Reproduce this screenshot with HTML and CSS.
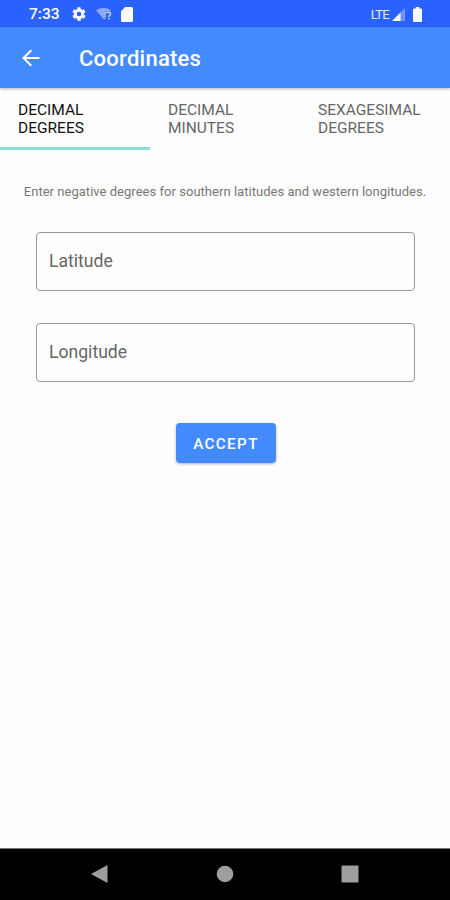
FILE: index.html
```
<!DOCTYPE html>
<html lang="en">
<head>
  <meta charset="UTF-8">
  <title>Coordinates</title>
  <link rel="stylesheet" href="styles.css">
</head>
<body>
  <div class="status-bar">
    <span class="clock">7:33</span>
    <svg class="icon-settings" width="16" height="16" viewBox="0 0 24 24"><path fill="#fff" fill-rule="evenodd" d="M19.4 13a7.500 7.500 0 0 0 0-2l2.100-1.650a.5.5 0 0 0 .12-.64l-2-3.460a.5.5 0 0 0-.6-.22l-2.500 1a7.300 7.300 0 0 0-1.700-.98l-.38-2.650A.5.5 0 0 0 14 2h-4a.5.5 0 0 0-.5.42l-.37 2.650c-.6.25-1.170.59-1.690.98l-2.500-1a.5.5 0 0 0-.6.22l-2 3.460a.5.5 0 0 0 .12.64L4.600 11a7.900 7.900 0 0 0 0 2l-2.100 1.650a.5.5 0 0 0-.12.64l2 3.460c.12.220.390.300.600.220l2.500-1c.52.400 1.080.730 1.700.980l.37 2.650c.04.240.250.400.500.400h4c.25 0 .46-.16.500-.4l.37-2.650a7.700 7.700 0 0 0 1.700-.98l2.500 1c.22.080.480 0 .600-.22l2-3.460a.5.5 0 0 0-.12-.64zM12 15.500a3.500 3.500 0 1 1 0-7 3.500 3.500 0 0 1 0 7z"/></svg>
    <svg class="icon-wifi" width="17" height="14" viewBox="0 0 17 14"><path fill="#8aa8ff" d="M0 3.200Q7.500-1.800 15 3.200L13.400 4.500H10v5.700L8.300 13z"/><path fill="none" stroke="#d5e0ff" stroke-width="1.400" d="M10.700 6.400c.2-1.800 3.900-1.800 3.900.3 0 1.500-1.700 1.700-1.700 3.400M12.900 11v1.500"/></svg>
    <svg class="icon-card" width="12" height="15" viewBox="0 0 12 15"><path fill="#fff" d="M4.200 0H10.500Q12 0 12 1.500V13.500Q12 15 10.500 15H1.500Q0 15 0 13.500V4.200z"/><path stroke="#dce5ff" d="M5 2v2M7.300 2v2M9.600 2v2"/></svg>
    <span class="network">LTE</span>
    <svg class="icon-signal" width="14" height="13" viewBox="0 0 14 13"><path fill="#7094ff" d="M13 0v13H8V5z"/><path fill="#fff" d="M0 13L8.500 4.500V13z"/></svg>
    <svg class="icon-battery" width="9" height="15" viewBox="0 0 9 15"><path fill="#fff" d="M2.700 0h3.600v1.500H8q1 0 1 1V14q0 1-1 1H1q-1 0-1-1V2.500q0-1 1-1h1.700z"/></svg>
  </div>

  <div class="app-bar">
    <svg class="icon-back" width="18" height="18" viewBox="0 0 18 18"><path fill="none" stroke="#fff" stroke-width="2" d="M17.500 9H2M9.300 1.200L1.500 9l7.800 7.800"/></svg>
    <h1 class="title">Coordinates</h1>
  </div>

  <div class="tabs">
    <div class="tab active">DECIMAL<br>DEGREES</div>
    <div class="tab">DECIMAL<br>MINUTES</div>
    <div class="tab">SEXAGESIMAL<br>DEGREES</div>
  </div>

  <div class="content">
    <p class="hint">Enter negative degrees for southern latitudes and western longitudes.</p>
    <div class="field">Latitude</div>
    <div class="field">Longitude</div>
    <button class="accept-button">ACCEPT</button>
  </div>

  <div class="nav-bar">
    <svg width="18" height="20" viewBox="0 0 18 20"><path fill="#9e9e9e" d="M0 10L16.500 1v18z"/></svg>
    <svg width="18" height="20" viewBox="0 0 18 20"><circle fill="#9e9e9e" cx="9" cy="10" r="8.300"/></svg>
    <svg width="18" height="20" viewBox="0 0 18 20"><rect fill="#9e9e9e" x=".5" y="1.500" width="17" height="17" rx="1"/></svg>
  </div>
</body>
</html>
```

FILE: styles.css
```
body {
  display: flex;
  flex-direction: column;
  height: 900px;
  margin: 0;
  font-family: Roboto, sans-serif;
  background: #fefefe;
  color: #666;
}
.status-bar {
  display: flex;
  align-items: center;
  box-sizing: border-box;
  height: 27px;
  padding: 1px 28px 0 29px;
  background: #2962ff;
  color: #fff;
}
.clock {
  width: 42px;
  font-size: 15.5px;
  font-weight: 500;
}
.icon-wifi {
  margin-left: 9px;
}
.icon-card {
  margin-left: 8px;
}
.network {
  margin-left: auto;
  font-size: 13px;
  letter-spacing: -0.7px;
  color: #e4ebff;
}
.icon-signal {
  margin: 1px 0 0 3px;
}
.icon-battery {
  margin-left: 7px;
}
.app-bar {
  display: flex;
  align-items: center;
  position: relative;
  height: 61px;
  padding-left: 22px;
  background: #448aff;
  box-shadow: 0 1px 3px rgba(0, 0, 0, 0.3);
}
.title {
  margin: 0 0 0 39px;
  padding-top: 2px;
  font-size: 22px;
  font-weight: 500;
  letter-spacing: 0.25px;
  color: #fff;
}
.tabs {
  display: flex;
  height: 62px;
}
.tab {
  box-sizing: border-box;
  width: 150px;
  padding: 13px 0 0 18px;
  font-size: 15.5px;
  line-height: 18px;
}
.tab.active {
  border-bottom: 3px solid #8bdfd3;
  color: #111;
}
.content {
  display: flex;
  flex: 1;
  flex-direction: column;
  align-items: center;
}
.hint {
  margin: 34px 0 32px;
  font-size: 13px;
  letter-spacing: 0.03px;
  line-height: 16px;
  white-space: nowrap;
  color: #777;
}
.field {
  box-sizing: border-box;
  width: 379px;
  height: 59px;
  margin: 0 0 32px 1px;
  padding-left: 12px;
  border: 1px solid #999;
  border-radius: 4px;
  font-size: 17.6px;
  line-height: 57px;
}
.accept-button {
  width: 100px;
  height: 40px;
  margin: 9px 0 0 1px;
  padding: 1px 0 0 1px;
  border: none;
  border-radius: 4px;
  background: #448aff;
  box-shadow: 0 1px 3px rgba(0, 0, 0, 0.3);
  font-family: inherit;
  font-size: 15.2px;
  font-weight: 500;
  letter-spacing: 1.4px;
  color: #fff;
}
.nav-bar {
  display: flex;
  justify-content: space-between;
  align-items: center;
  box-sizing: border-box;
  height: 52px;
  padding: 0 91px 1px;
  border-top: 1px solid #777;
  background: #000;
}
```
